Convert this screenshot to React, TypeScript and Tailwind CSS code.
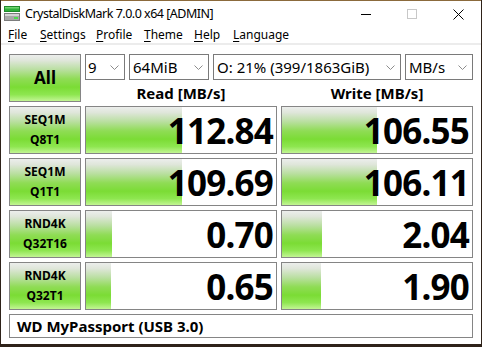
import React from "react";

const grad =
  "bg-[linear-gradient(to_bottom,#eceeec_0%,#dfe6da_12%,#b9dfa0_32%,#8fdc55_52%,#7bdc35_70%,#8ee650_86%,#c2f594_100%)]";

function Chev() {
  return (
    <svg width="9" height="5" viewBox="0 0 9 5">
      <path d="M0.5 0.5 L4.5 4.5 L8.5 0.5" fill="none" stroke="#8c8c8c" strokeWidth="1" />
    </svg>
  );
}

function Select({ w, text, pl }: { w: string; text: string; pl: string }) {
  return (
    <div className={`${w} h-[26px] border border-[#7a7a7a] flex items-center ${pl} pr-[5px] text-[15px] leading-none text-black`}>
      <span>{text}</span>
      <span className="ml-auto flex">
        <Chev />
      </span>
    </div>
  );
}

function Label({ a, b }: { a: string; b: string }) {
  return (
    <div className={`border border-[#858585] ${grad} flex flex-col items-center justify-center font-bold text-[12px] leading-[20px] text-black`}>
      <span>{a}</span>
      <span>{b}</span>
    </div>
  );
}

function Value({ v, bar }: { v: string; bar: number }) {
  return (
    <div className="relative border border-[#858585] bg-white flex items-center justify-end pr-[3px] overflow-hidden">
      <div className={`absolute left-0 top-0 bottom-0 ${grad}`} style={{ width: `${bar}px` }} />
      <span className="relative font-bold text-[35px] leading-none tracking-[-0.8px] text-black">{v}</span>
    </div>
  );
}

const rows = [
  { a: "SEQ1M", b: "Q8T1", r: "112.84", rb: 96, w: "106.55", wb: 95 },
  { a: "SEQ1M", b: "Q1T1", r: "109.69", rb: 96, w: "106.11", wb: 95 },
  { a: "RND4K", b: "Q32T16", r: "0.70", rb: 26, w: "2.04", wb: 40 },
  { a: "RND4K", b: "Q32T1", r: "0.65", rb: 25, w: "1.90", wb: 39 },
];

export default function App() {
  return (
    <div className="w-[482px] h-[347px] bg-[#2e2219] px-px font-['Noto_Sans',sans-serif] text-black">
      <div className="h-[344px] bg-white border-t border-[#8b6a3c] flex flex-col">
        {/* title bar */}
        <div className="h-[26px] flex items-center shrink-0">
          <svg className="ml-[3px]" width="16" height="16" viewBox="0 0 16 16">
            <rect x="0.5" y="0.5" width="15" height="5" fill="#2fae3a" stroke="#1f8a2a" />
            <rect x="1" y="1" width="14" height="1.5" fill="#6fd46f" />
            <rect x="0.5" y="7.5" width="15" height="7" fill="#a9a9a9" stroke="#7c7c7c" />
            <rect x="1" y="8" width="14" height="2" fill="#d4d4d4" />
            <rect x="10" y="11" width="4" height="2" fill="#4fdc4f" />
          </svg>
          <span className="ml-[5px] text-[12.5px] tracking-[-0.5px] leading-none">CrystalDiskMark 7.0.0 x64 [ADMIN]</span>
          <div className="ml-auto flex h-full">
            <div className="w-[46px] h-full flex items-center justify-center">
              <div className="w-[10px] h-px bg-black" />
            </div>
            <div className="w-[46px] h-full flex items-center justify-center">
              <div className="w-[10px] h-[10px] border border-[#c8c8c8]" />
            </div>
            <div className="w-[46px] h-full flex items-center justify-center">
              <svg width="11" height="11" viewBox="0 0 11 11">
                <path d="M0.5 0.5 L10.5 10.5 M10.5 0.5 L0.5 10.5" stroke="#000" strokeWidth="1" />
              </svg>
            </div>
          </div>
        </div>
        {/* menu bar */}
        <div className="h-[16px] flex items-center pl-[7px] text-[12px] leading-none shrink-0">
          <span className="w-[32px]"><span className="underline underline-offset-2">F</span>ile</span>
          <span className="w-[56px]"><span className="underline underline-offset-2">S</span>ettings</span>
          <span className="w-[48px]"><span className="underline underline-offset-2">P</span>rofile</span>
          <span className="w-[50px]"><span className="underline underline-offset-2">T</span>heme</span>
          <span className="w-[39px]"><span className="underline underline-offset-2">H</span>elp</span>
          <span><span className="underline underline-offset-2">L</span>anguage</span>
        </div>
        <div className="h-[2px] bg-[#ececec] shrink-0" />
        {/* content */}
        <div className="pt-[9px] pl-[8px]">
          <div className="grid grid-cols-[72px_192px_192px] grid-rows-[26px_18px_48px_48px_48px_48px_24px] gap-[4px]">
            <div className={`row-span-2 border border-[#858585] ${grad} flex items-center justify-center font-bold text-[17px]`}>
              All
            </div>
            <div className="col-span-2 flex gap-[4px]">
              <Select w="w-[40px]" text="9" pl="pl-[2px]" />
              <Select w="w-[80px]" text="64MiB" pl="pl-[3px]" />
              <Select w="w-[188px]" text="O: 21% (399/1863GiB)" pl="pl-[3px]" />
              <Select w="w-[68px]" text="MB/s" pl="pl-[3px]" />
            </div>
            <div className="flex items-center justify-center font-bold text-[15px] leading-none">Read [MB/s]</div>
            <div className="flex items-center justify-center font-bold text-[15px] leading-none">Write [MB/s]</div>
            {rows.map((r, i) => (
              <React.Fragment key={i}>
                <Label a={r.a} b={r.b} />
                <Value v={r.r} bar={r.rb} />
                <Value v={r.w} bar={r.wb} />
              </React.Fragment>
            ))}
            <div className="col-span-3 border border-[#858585] flex items-center pl-[7px] font-bold text-[15px] leading-none">
              WD MyPassport (USB 3.0)
            </div>
          </div>
        </div>
      </div>
    </div>
  );
}
